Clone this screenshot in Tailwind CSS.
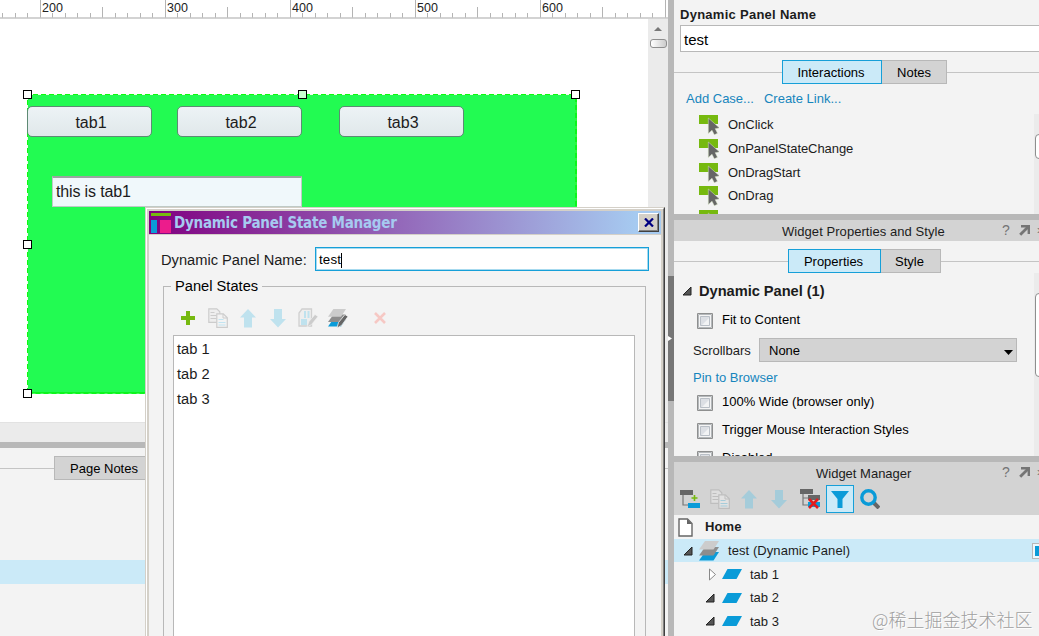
<!DOCTYPE html>
<html lang="en">

<head>
    <meta charset="UTF-8" />
    <meta name="viewport" content="width=device-width, initial-scale=1.0" />
    <title>Dynamic Panel State Manager</title>
    <script src="https://cdn.jsdelivr.net/npm/@tailwindcss/browser@4"></script>
</head>

<body class="relative flex h-[636px] w-[1039px] overflow-hidden bg-[#b8b8b8] font-['Liberation_Sans',Arial,sans-serif] text-[13px] leading-4 whitespace-nowrap text-[#1c1c1c]">

    <!-- Shared icons -->
    <svg class="hidden">
        <defs>
            <symbol id="i-case" viewBox="0 0 20 20">
                <path d="M0 0h19v9H0z" fill="#76b90f" />
                <path d="M9.300 3v15.500l3.700-3.300 2.300 4.600 3.200-1.500-2.300-4.600 4.300-.8z" fill="#666" stroke="#d8e6c4" stroke-width=".5" />
            </symbol>
            <symbol id="i-copy" viewBox="0 0 20 20">
                <path d="M.8.8h8l3 3v10.500H.8z" fill="#eee" stroke="#ccc" stroke-width="1.200" />
                <path d="M2.500 4.500h4M2.500 7.500h6M2.500 10.500h6" stroke="#ccc" />
                <path d="M8.800 5.800h6.500l4 4v9.500H8.800z" fill="#f3f3f3" stroke="#ccc" stroke-width="1.200" />
                <path d="M15 6v4h4" fill="none" stroke="#ccc" />
                <path d="M10.500 11.500h5M10.500 14.500h7M10.500 17h7" stroke="#c2e4f1" />
            </symbol>
            <symbol id="i-copy-dim" viewBox="0 0 20 20">
                <path d="M.8.8h8l3 3v10.500H.8z" fill="#dedede" stroke="#bebebe" stroke-width="1.200" />
                <path d="M2.500 4.500h4M2.500 7.500h6M2.500 10.500h6" stroke="#bebebe" />
                <path d="M8.800 5.800h6.500l4 4v9.500H8.800z" fill="#e2e2e2" stroke="#bebebe" stroke-width="1.200" />
                <path d="M15 6v4h4" fill="none" stroke="#bebebe" />
                <path d="M10.500 11.500h5M10.500 14.500h7M10.500 17h7" stroke="#a5ccda" />
            </symbol>
            <symbol id="i-up" viewBox="0 0 16 19">
                <path d="M8 0l8 8.500h-4V18.500H4V8.500H0z" />
            </symbol>
            <symbol id="i-down" viewBox="0 0 16 19">
                <path d="M8 18.500l8-8.500h-4V0H4v10H0z" />
            </symbol>
            <symbol id="i-layers" viewBox="0 0 20 20">
                <path d="M6 11h14l-5.500 8.500H0z" fill="#0a9bd8" />
                <path d="M6 6h14l-5.500 8.500H0z" fill="#8d8d8d" />
                <path d="M6 0h14l-5.500 8.500H0z" fill="#ccc" />
            </symbol>
            <symbol id="i-open" viewBox="0 0 10 10">
                <path d="M9 1v8H1z" fill="#555" stroke="#222" />
            </symbol>
            <symbol id="i-popout" viewBox="0 0 11 11">
                <path d="M2 1.200h7.800V9" fill="none" stroke="#757575" stroke-width="2.400" />
                <path d="M1.200 9.800L9 2" stroke="#757575" stroke-width="2.800" />
            </symbol>
            <symbol id="i-state" viewBox="0 0 20 10">
                <path d="M5.500 0H20l-5.500 10H0z" fill="#0a9bd8" />
            </symbol>
            <symbol id="i-check" viewBox="0 0 16 16">
                <path d="M.5.500h15v15H.5z" fill="#fff" stroke="#8e8f8f" />
                <path d="M1.500 1.500h13v13h-13z" fill="#f4f4f4" stroke="#b4b8bb" />
                <path d="M3.500 3.500h9v9h-9z" fill="#dcdfe4" stroke="#b9bfc6" />
                <path d="M12 5v7H5z" fill="#f2f3f4" />
            </symbol>
        </defs>
    </svg>

    <!-- Design area -->
    <main class="flex w-[668px] shrink-0 flex-col bg-[#f3f3f3]">
        <!-- Ruler -->
        <svg class="h-[19px] w-full shrink-0 bg-white text-[12.500px]" fill="#222">
            <defs>
                <pattern id="ticks" x="40" width="125" height="19" patternUnits="userSpaceOnUse">
                    <path d="M.5 0v18" stroke="#b4b4b4" />
                    <path d="M62.500 7v11" stroke="#b4b4b4" />
                    <path d="M12.500 13v5M25.500 13v5M37.500 13v5M50.500 13v5M75.500 13v5M87.500 13v5M100.500 13v5M112.500 13v5" stroke="#b4b4b4" />
                </pattern>
            </defs>
            <rect width="668" height="19" fill="url(#ticks)" />
            <path d="M0 18h668" stroke="#c4c4c4" stroke-width="1.500" />
            <text x="42" y="12">200</text>
            <text x="167" y="12">300</text>
            <text x="292" y="12">400</text>
            <text x="417" y="12">500</text>
            <text x="542" y="12">600</text>
        </svg>

        <div class="flex h-[403px] shrink-0">
            <!-- Canvas -->
            <div class="relative w-[648px] overflow-hidden bg-white text-base">
                <div class="absolute top-[75px] left-[27px] h-[300px] w-[550px] bg-[#22fb52]">
                    <svg class="absolute inset-0 h-full w-full" fill="none">
                        <path d="M550 .5H.5V300" stroke="#0dfb0d" />
                        <path d="M549 0V299H0" stroke="#0df51d" stroke-width="2" />
                        <path d="M550 .5H.5V300" stroke="#eaffea" stroke-dasharray="3 5" />
                        <path d="M549 0V299.500H0" stroke="#49fb60" stroke-dasharray="3 5" />
                    </svg>
                    <div class="absolute top-3 left-0 flex h-[31px] w-[125px] items-center justify-center rounded-[5px] border border-[#5e8a74] bg-gradient-to-b from-[#edf3f6] to-[#e0e8ea] pt-[2px] pl-[3px]">tab1</div>
                    <div class="absolute top-3 left-[150px] flex h-[31px] w-[125px] items-center justify-center rounded-[5px] border border-[#5e8a74] bg-gradient-to-b from-[#edf3f6] to-[#e0e8ea] pt-[2px] pl-[3px]">tab2</div>
                    <div class="absolute top-3 left-[312px] flex h-[31px] w-[125px] items-center justify-center rounded-[5px] border border-[#5e8a74] bg-gradient-to-b from-[#edf3f6] to-[#e0e8ea] pt-[2px] pl-[3px]">tab3</div>
                    <div class="absolute top-[82px] left-[25px] flex h-[31px] w-[250px] items-center border border-t-2 border-[#bfcac6] border-t-[#9aa5a0] bg-[#f0f8fb] pl-[3px] tracking-[-.15px]">this is tab1</div>
                    <!-- Resize handles -->
                    <i class="absolute -top-1 -left-1 size-[9px] border border-black bg-white"></i>
                    <i class="absolute -top-1 left-[271px] size-[9px] border border-black bg-[#c8ffd0]"></i>
                    <i class="absolute -top-1 left-[544px] size-[9px] border border-black bg-white"></i>
                    <i class="absolute top-[146px] -left-1 size-[9px] border border-black bg-white"></i>
                    <i class="absolute top-[295px] -left-1 size-[9px] border border-black bg-white"></i>
                </div>
            </div>
            <!-- Vertical scrollbar -->
            <div class="flex w-5 flex-col items-center gap-2 bg-[#ebebeb] pt-2">
                <svg class="h-1 w-2 shrink-0"><path d="M4 0l4 4H0z" fill="#777" /></svg>
                <div class="h-[9px] w-[17px] rounded-[3px] border border-[#8e8e8e] bg-gradient-to-r from-white to-[#ccc]"></div>
            </div>
        </div>
        <div class="h-5 shrink-0 border-t border-[#e2e2e2] bg-[#ebebeb]"></div>
        <div class="h-1.5 shrink-0 bg-[#b8b8b8]"></div>

        <!-- Page notes -->
        <div class="mt-2 flex h-6 shrink-0 items-center">
            <div class="h-px w-[54px] bg-[#c4c4c4]"></div>
            <div class="flex h-6 w-[100px] items-center justify-center border border-[#b8b8b8] bg-[#d3d3d3] pt-px text-black">Page Notes</div>
            <div class="h-px flex-1 bg-[#c4c4c4]"></div>
        </div>
        <div class="mt-20 h-6 shrink-0 bg-[#cbeaf8]"></div>
    </main>

    <!-- Splitter -->
    <div class="w-1.5 shrink-0 pt-[276px]">
        <div class="flex h-[125px] items-center bg-[#767676]">
            <svg class="h-[5px] w-1"><path d="M0 0l4 2.500L0 5z" fill="#fff" /></svg>
        </div>
    </div>

    <aside class="flex w-[365px] shrink-0 flex-col gap-1.5 overflow-hidden">
        <!-- Interactions -->
        <section class="flex h-[214px] shrink-0 flex-col overflow-hidden bg-[#f3f3f3]">
            <h2 class="mt-[7px] ml-1.5 font-bold tracking-[.27px]">Dynamic Panel Name</h2>
            <div class="mt-[2px] ml-1.5 flex h-[27px] w-[380px] shrink-0 items-center border border-[#b8b8b8] bg-white pt-[3px] pl-[3px] text-[15px] text-black">test</div>
            <div class="mt-2 flex h-6 shrink-0 items-center text-black">
                <div class="h-px w-[108px] bg-[#c4c4c4]"></div>
                <div class="flex h-6 w-[100px] items-center justify-center border border-[#169fd8] bg-[#cbeaf8] pt-px pr-[2px]">Interactions</div>
                <div class="flex h-6 w-[65px] items-center justify-center border border-l-0 border-[#b8b8b8] bg-[#d3d3d3] pt-px">Notes</div>
                <div class="h-px flex-1 bg-[#c4c4c4]"></div>
            </div>
            <div class="mt-[7px] flex h-4 shrink-0 gap-2.5 pl-3 text-[#1685bd]"><a>Add Case...</a><a>Create Link...</a></div>
            <div class="mt-[7px] flex h-[100px] shrink-0 justify-between">
                <ul>
                    <li class="flex h-6 gap-[9px] pt-px pl-[25px]"><svg class="size-5"><use href="#i-case" /></svg><span class="mt-[2px]">OnClick</span></li>
                    <li class="flex h-6 gap-[9px] pt-px pl-[25px]"><svg class="size-5"><use href="#i-case" /></svg><span class="mt-[2px] tracking-[-.07px]">OnPanelStateChange</span></li>
                    <li class="flex h-6 gap-[9px] pt-px pl-[25px]"><svg class="size-5"><use href="#i-case" /></svg><span class="mt-[2px] tracking-[-.07px]">OnDragStart</span></li>
                    <li class="flex h-6 gap-[9px] pl-[25px]"><svg class="size-5"><use href="#i-case" /></svg><span class="mt-[2px]">OnDrag</span></li>
                    <li class="flex h-6 pl-[25px]"><svg class="size-5"><use href="#i-case" /></svg></li>
                </ul>
                <div class="w-[5px] bg-[#ebebeb] pt-5 pl-px"><div class="h-[25px] w-5 rounded border border-[#8e8e8e] bg-white"></div></div>
            </div>
        </section>

        <!-- Widget properties -->
        <section class="flex h-[236px] shrink-0 flex-col overflow-hidden bg-[#f3f3f3]">
            <header class="flex h-[21px] shrink-0 items-center bg-[#d3d3d3]">
                <span class="ml-[108px] w-[220px] shrink-0 pt-[2px] tracking-[.06px]">Widget Properties and Style</span>
                <span class="w-[17px] shrink-0 pb-[2px] text-sm text-[#757575]">?</span>
                <svg class="size-[11px] shrink-0"><use href="#i-popout" /></svg>
                <span class="ml-[7px] pb-[2px] text-[#757575]">»</span>
            </header>
            <div class="mt-2 flex h-6 shrink-0 items-center text-black">
                <div class="h-px w-[114px] bg-[#c4c4c4]"></div>
                <div class="flex h-6 w-[93px] items-center justify-center border border-[#169fd8] bg-[#cbeaf8] pt-px pr-[2px]">Properties</div>
                <div class="flex h-6 w-[60px] items-center justify-center border border-l-0 border-[#b8b8b8] bg-[#d3d3d3] pt-px pr-[2px]">Style</div>
                <div class="h-px flex-1 bg-[#c4c4c4]"></div>
            </div>
            <div class="flex h-[184px] shrink-0 justify-between">
                <div class="w-[343px] pt-2.5">
                    <h3 class="flex h-4 items-center gap-[7px] pl-2 text-[14.670px] font-bold tracking-[-.04px]"><svg class="size-2.5"><use href="#i-open" /></svg>Dynamic Panel (1)</h3>
                    <label class="mt-[13px] flex h-[18px] gap-[9px] pl-[23px] text-black"><svg class="mt-px size-4"><use href="#i-check" /></svg>Fit to Content</label>
                    <div class="mt-2 flex h-6 items-center pl-[19px]">
                        <span class="w-[66px] pt-px">Scrollbars</span>
                        <div class="flex h-6 w-[258px] items-center justify-between border border-[#b8b8b8] bg-[#d3d3d3] pr-[3px] pl-[9px] text-black"><span class="pt-px">None</span>
                            <svg class="mt-1 h-[5px] w-[9px]"><path d="M0 0h9L4.500 5z" /></svg>
                        </div>
                    </div>
                    <a class="mt-2 block h-4 pl-[19px] text-[#1685bd]">Pin to Browser</a>
                    <label class="mt-2 flex h-[18px] gap-[9px] pl-[23px] text-black"><svg class="mt-px size-4"><use href="#i-check" /></svg>100% Wide (browser only)</label>
                    <label class="mt-2.5 flex h-[18px] gap-[9px] pl-[23px] text-black"><svg class="mt-px size-4"><use href="#i-check" /></svg>Trigger Mouse Interaction Styles</label>
                    <label class="mt-2.5 flex h-[18px] gap-[9px] pl-[23px] text-black"><svg class="mt-px size-4"><use href="#i-check" /></svg>Disabled</label>
                </div>
                <div class="w-[5px] bg-[#ebebeb] pt-5 pl-px"><div class="h-[84px] w-5 rounded border border-[#8e8e8e] bg-white"></div></div>
            </div>
        </section>

        <!-- Widget manager -->
        <section class="flex h-[174px] shrink-0 flex-col overflow-hidden bg-[#f3f3f3]">
            <header class="h-[53px] shrink-0 bg-[#d3d3d3]">
                <div class="flex h-[21px] items-center">
                    <span class="ml-[142px] w-[186px] shrink-0 pt-[2px]">Widget Manager</span>
                    <span class="w-[17px] shrink-0 pb-[2px] text-sm text-[#757575]">?</span>
                    <svg class="mb-px size-[11px] shrink-0"><use href="#i-popout" /></svg>
                    <span class="ml-[7px] pb-[2px] text-[#757575]">»</span>
                </div>
                <div class="mt-[2px] flex h-7 items-center gap-2.5 pl-1.5">
                    <svg class="h-5 w-5" viewBox="0 0 20 20">
                        <path d="M3 5v11h6" fill="none" stroke="#777" stroke-width="1.200" />
                        <path d="M0 1h13v5H0z" fill="#666" />
                        <path d="M8 14h12v5H8z" fill="#0a9bd8" />
                        <path d="M14.500 6v6M11.500 9h6" stroke="#76b90f" stroke-width="1.600" />
                    </svg>
                    <svg class="size-5"><use href="#i-copy-dim" /></svg>
                    <svg class="ml-px h-[19px] w-4" fill="#a5ccda"><use href="#i-up" /></svg>
                    <svg class="ml-1 h-[19px] w-4" fill="#a5ccda"><use href="#i-down" /></svg>
                    <svg class="ml-[3px] h-5 w-5" viewBox="0 0 20 20">
                        <path d="M3 5v11h6M3 9h6" fill="none" stroke="#777" stroke-width="1.200" />
                        <path d="M0 0h13v5H0zM8 6h12v5H8z" fill="#666" />
                        <path d="M8 13h12v5H8z" fill="#0a9bd8" />
                        <path d="M9 10l9 9M18 10l-9 9" stroke="#e31c1c" stroke-width="2.600" />
                    </svg>
                    <div class="-ml-1 flex h-7 w-7 items-center justify-center border border-[#169fd8] bg-[#cbeaf8]">
                        <svg class="h-[17px] w-[18px]"><path d="M0 0h18l-6.500 8v9h-5V8z" fill="#0a9bd8" /></svg>
                    </div>
                    <svg class="-ml-1 size-5">
                        <path d="M14 14l5 5" stroke="#666" stroke-width="4" />
                        <circle cx="8.500" cy="8.500" r="6.700" fill="#d3d3d3" stroke="#0a9bd8" stroke-width="3.400" />
                    </svg>
                </div>
            </header>
            <div class="flex h-6 shrink-0 items-center pl-1">
                <svg class="mt-px mr-3 h-[19px] w-[15px]">
                    <path d="M1 1h8.500l4.500 4.500V18H1z" fill="#fff" stroke="#666" stroke-width="1.400" />
                    <path d="M9 1l5 5H9z" fill="#666" />
                </svg>
                <b class="tracking-[.1px]">Home</b>
            </div>
            <div class="flex h-[23px] shrink-0 items-center bg-[#cbeaf8] pl-[9px]">
                <svg class="size-2.5"><use href="#i-open" /></svg>
                <svg class="mr-[9px] ml-1.5 size-5"><use href="#i-layers" /></svg>
                <span class="tracking-[.07px]">test (Dynamic Panel)</span>
                <div class="mr-[-9px] ml-auto flex size-4 shrink-0 items-center justify-center border border-[#b8b8b8] bg-[#eef8fc]"><i class="size-2.5 bg-[#0a9bd8]"></i></div>
            </div>
            <div class="flex h-6 shrink-0 items-center pl-[35px]">
                <svg class="mr-1.5 h-[13px] w-[7px]"><path d="M.5 1v11L6.500 6.500z" fill="#fff" stroke="#888" /></svg>
                <svg class="mr-2 h-2.5 w-5"><use href="#i-state" /></svg><span class="pt-px">tab 1</span>
            </div>
            <div class="flex h-[23px] shrink-0 items-center pl-[31px]">
                <svg class="mr-[7px] size-2.5"><use href="#i-open" /></svg>
                <svg class="mr-2 h-2.5 w-5"><use href="#i-state" /></svg>tab 2
            </div>
            <div class="flex h-6 shrink-0 items-center pl-[31px]">
                <svg class="mr-[7px] size-2.5"><use href="#i-open" /></svg>
                <svg class="mr-2 h-2.5 w-5"><use href="#i-state" /></svg><span class="pt-px">tab 3</span>
            </div>
        </section>
    </aside>

    <!-- State manager dialog -->
    <div class="absolute top-[207px] left-[145px] h-[440px] w-[520px] border border-[#d4d0c8] border-r-[#404040] bg-[#f3f3f3] text-[14.670px]">
        <div class="h-full border border-white border-r-[#808080]">
            <div class="flex h-full flex-col border-2 border-b-0 border-[#d4d0c8]">
                <header class="flex h-[24px] shrink-0 items-center border-b border-[#d4d0c8] bg-linear-to-r/srgb from-[#800080] to-[#a6caf0] to-95% pr-[2px] pl-[2px]">
                    <svg class="h-5 w-5">
                        <path d="M0 0h20v3H0z" fill="#76b90f" />
                        <path d="M0 7h6v13H0z" fill="#0a9bd8" />
                        <path d="M9 7h11v13H9z" fill="#ec1c8c" />
                    </svg>
                    <h1 class="ml-[3px] flex-1 font-['DejaVu_Sans_Condensed','DejaVu_Sans',sans-serif] text-[15px] font-bold tracking-[-.24px] text-[#a6caf0]">Dynamic Panel State Manager</h1>
                    <button class="flex h-[19px] w-[21px] items-center justify-center border border-white border-r-[#404040] border-b-[#404040] bg-[#d4d0c8] shadow-[inset_-1px_-1px_#808080]">
                        <svg class="h-[9px] w-[10px]"><path d="M1 .5l8 8M9 .5l-8 8" stroke="#000080" stroke-width="2.200" /></svg>
                    </button>
                </header>

                <div class="flex shrink-0 items-center pt-3 pl-3">
                    <span class="w-[154px] pt-px">Dynamic Panel Name:</span>
                    <div class="flex h-6 w-[334px] items-center border-[1.500px] border-[#169fd8] bg-white pt-[2px] pl-[3px] text-[13.330px] tracking-[.15px] text-black shadow-[inset_0_0_0_1px_#a7daef]">test<i class="h-[15px] w-px bg-black"></i></div>
                </div>

                <div class="mt-[15px] ml-[14px] flex w-[483px] flex-1 flex-col border border-[#b8b8b8] px-[9px]">
                    <div class="-mt-[9px] -ml-px w-[98px] pl-[3px]"><span class="-ml-1 bg-[#f3f3f3] px-1 text-black">Panel States</span></div>
                    <div class="mt-[14px] flex h-5 items-center">
                        <svg class="ml-2 h-[14px] w-[14px]"><path d="M5 0h4v5h5v4H9v5H5V9H0V5h5z" fill="#76b90f" /></svg>
                        <svg class="ml-[13px] size-5"><use href="#i-copy" /></svg>
                        <svg class="ml-3 h-[19px] w-4" fill="#bfe2ee"><use href="#i-up" /></svg>
                        <svg class="ml-[14px] h-[19px] w-4" fill="#bfe2ee"><use href="#i-down" /></svg>
                        <svg class="ml-3 h-5 w-5">
                            <path d="M4 1h9.500v17H1V5z" fill="#eee" stroke="#d0d0d0" stroke-width="1.300" />
                            <path d="M6 3h2v7H6zM9.500 3h2v7h-2zM3 11h6v6H3z" fill="#bfe2ee" />
                            <path d="M9 19l2-5.500 6-7 3 2-6.500 8z" fill="#ccc" stroke="#f3f3f3" stroke-width=".6" />
                        </svg>
                        <svg class="ml-2.5 h-5 w-5">
                            <use href="#i-layers" width="18" height="20" />
                            <path d="M9 20l1.500-5.500 6.500-8 3 2-6.500 9z" fill="#666" stroke="#f3f3f3" stroke-width=".8" />
                        </svg>
                        <svg class="ml-[26px] h-3 w-3"><path d="M1 1l10 10M11 1L1 11" stroke="#f6c8c4" stroke-width="2.600" /></svg>
                    </div>
                    <ul class="mt-[7px] w-[462px] flex-1 border border-[#b8b8b8] bg-white pt-px pl-[3px] leading-[25px]">
                        <li>tab 1</li>
                        <li>tab 2</li>
                        <li>tab 3</li>
                    </ul>
                </div>
            </div>
        </div>
    </div>

    <!-- Watermark -->
    <div class="absolute top-[607px] left-[872px] font-['Noto_Sans_CJK_SC',sans-serif] text-[18px] leading-6 font-light text-[#a0a0a0] [text-shadow:1px_1px_#fff]">@稀土掘金技术社区</div>
</body>

</html>
